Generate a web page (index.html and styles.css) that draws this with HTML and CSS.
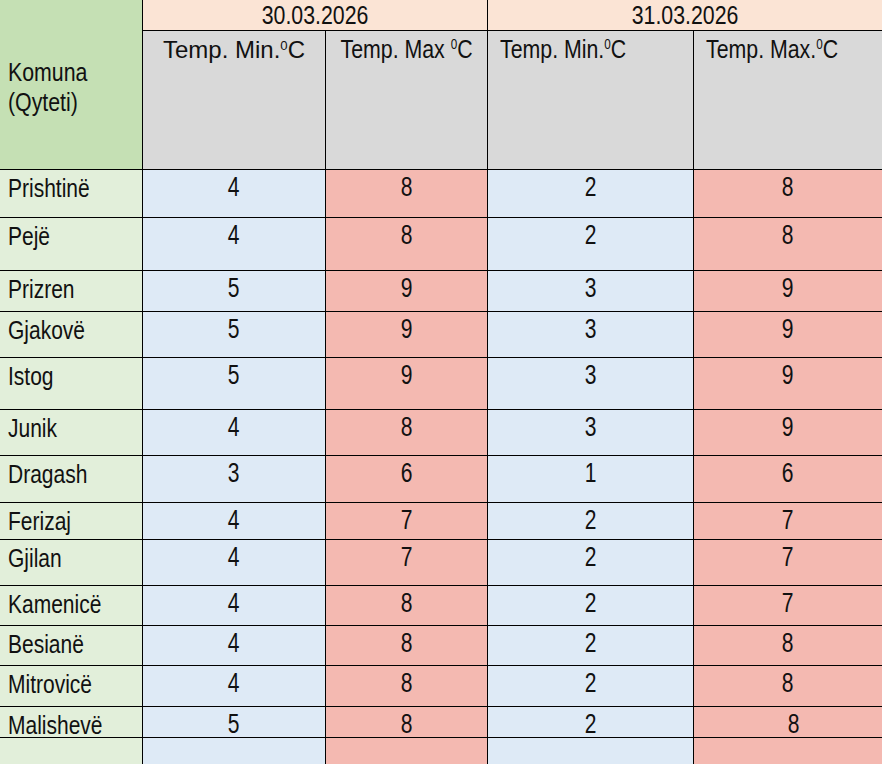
FILE: index.html
```html
<!DOCTYPE html>
<html lang="sq">
<head>
<meta charset="utf-8">
<title>Temperaturat</title>
<link rel="stylesheet" href="styles.css">
</head>
<body>
<div class="sheet">
  <div class="cell corner"><span class="t">Komuna<br>(Qyteti)</span></div>
  <div class="cell date"><span class="t">30.03.2026</span></div>
  <div class="cell date last"><span class="t">31.03.2026</span></div>

  <div class="cell head wide center"><span class="w">Temp. Min.<sup>0</sup>C</span></div>
  <div class="cell head center"><span class="t">Temp. Max <sup>0</sup>C</span></div>
  <div class="cell head left"><span class="t">Temp. Min.<sup>0</sup>C</span></div>
  <div class="cell head left last"><span class="t">Temp. Max.<sup>0</sup>C</span></div>

  <div class="cell name"><span class="t">Prishtinë</span></div><div class="cell num min"><span class="t">4</span></div><div class="cell num max"><span class="t">8</span></div><div class="cell num min"><span class="t">2</span></div><div class="cell num max last"><span class="t">8</span></div>
  <div class="cell name"><span class="t">Pejë</span></div><div class="cell num min"><span class="t">4</span></div><div class="cell num max"><span class="t">8</span></div><div class="cell num min"><span class="t">2</span></div><div class="cell num max last"><span class="t">8</span></div>
  <div class="cell name"><span class="t">Prizren</span></div><div class="cell num min"><span class="t">5</span></div><div class="cell num max"><span class="t">9</span></div><div class="cell num min"><span class="t">3</span></div><div class="cell num max last"><span class="t">9</span></div>
  <div class="cell name"><span class="t">Gjakovë</span></div><div class="cell num min"><span class="t">5</span></div><div class="cell num max"><span class="t">9</span></div><div class="cell num min"><span class="t">3</span></div><div class="cell num max last"><span class="t">9</span></div>
  <div class="cell name"><span class="t">Istog</span></div><div class="cell num min"><span class="t">5</span></div><div class="cell num max"><span class="t">9</span></div><div class="cell num min"><span class="t">3</span></div><div class="cell num max last"><span class="t">9</span></div>
  <div class="cell name"><span class="t">Junik</span></div><div class="cell num min"><span class="t">4</span></div><div class="cell num max"><span class="t">8</span></div><div class="cell num min"><span class="t">3</span></div><div class="cell num max last"><span class="t">9</span></div>
  <div class="cell name"><span class="t">Dragash</span></div><div class="cell num min"><span class="t">3</span></div><div class="cell num max"><span class="t">6</span></div><div class="cell num min"><span class="t">1</span></div><div class="cell num max last"><span class="t">6</span></div>
  <div class="cell name"><span class="t">Ferizaj</span></div><div class="cell num min"><span class="t">4</span></div><div class="cell num max"><span class="t">7</span></div><div class="cell num min"><span class="t">2</span></div><div class="cell num max last"><span class="t">7</span></div>
  <div class="cell name"><span class="t">Gjilan</span></div><div class="cell num min"><span class="t">4</span></div><div class="cell num max"><span class="t">7</span></div><div class="cell num min"><span class="t">2</span></div><div class="cell num max last"><span class="t">7</span></div>
  <div class="cell name"><span class="t">Kamenicë</span></div><div class="cell num min"><span class="t">4</span></div><div class="cell num max"><span class="t">8</span></div><div class="cell num min"><span class="t">2</span></div><div class="cell num max last"><span class="t">7</span></div>
  <div class="cell name"><span class="t">Besianë</span></div><div class="cell num min"><span class="t">4</span></div><div class="cell num max"><span class="t">8</span></div><div class="cell num min"><span class="t">2</span></div><div class="cell num max last"><span class="t">8</span></div>
  <div class="cell name"><span class="t">Mitrovicë</span></div><div class="cell num min"><span class="t">4</span></div><div class="cell num max"><span class="t">8</span></div><div class="cell num min"><span class="t">2</span></div><div class="cell num max last"><span class="t">8</span></div>
  <div class="cell name"><span class="t">Malishevë</span></div><div class="cell num min"><span class="t">5</span></div><div class="cell num max"><span class="t">8</span></div><div class="cell num min"><span class="t">2</span></div><div class="cell num max last shift"><span class="t">8</span></div>
  <div class="cell name"></div><div class="cell num min"></div><div class="cell num max"></div><div class="cell num min"></div><div class="cell num max last"></div>
</div>
</body>
</html>
```
FILE: styles.css
```css
html, body {
  margin: 0;
  padding: 0;
  background: #ffffff;
}

.sheet {
  display: grid;
  width: 882px;
  grid-template-columns: 143px 183px 162px 206px 188px;
  grid-template-rows: 31px 139px 48px 53px 41px 46px 52px 46px 47px 37px 46px 40px 40px 41px 31px 30px;
  font-family: "Liberation Sans", Arial, sans-serif;
  font-size: 26px;
  color: #111;
  overflow: hidden;
}

.cell {
  box-sizing: border-box;
  border-right: 1px solid #000;
  border-bottom: 1px solid #000;
  line-height: 30px;
  white-space: nowrap;
}

.cell.last {
  border-right: none;
}

/* condensed (Arial Narrow look) text */
.t {
  display: inline-block;
  transform: scaleX(0.82);
  transform-origin: center top;
}

.corner .t,
.name .t,
.head.left .t {
  transform-origin: left top;
}

.w {
  display: inline-block;
}

.corner {
  grid-row: 1 / span 2;
  background: #c5e0b4;
  display: flex;
  align-items: center;
  padding: 4px 0 0 8px;
}

.date {
  grid-column: span 2;
  background: #fbe4d5;
  text-align: center;
  padding-top: 0;
}

.head {
  background: #d9d9d9;
  padding-top: 3px;
}

.head.center {
  text-align: center;
}

.head.left {
  padding-left: 12px;
}

.head.wide {
  font-size: 24px;
  padding-top: 4px;
}

sup {
  font-size: 0.55em;
  line-height: 0;
  vertical-align: 0.62em;
}

.name {
  background: #e2efda;
  font-size: 25px;
  padding: 3px 0 0 8px;
}

.name .t {
  transform: scaleX(0.84);
}

.num {
  text-align: center;
  font-size: 27px;
  padding-top: 2px;
}

.num .t {
  transform: scaleX(0.78);
}

.min {
  background: #deeaf6;
}

.max {
  background: #f4b9b1;
}

.shift {
  padding-left: 12px;
}
```
